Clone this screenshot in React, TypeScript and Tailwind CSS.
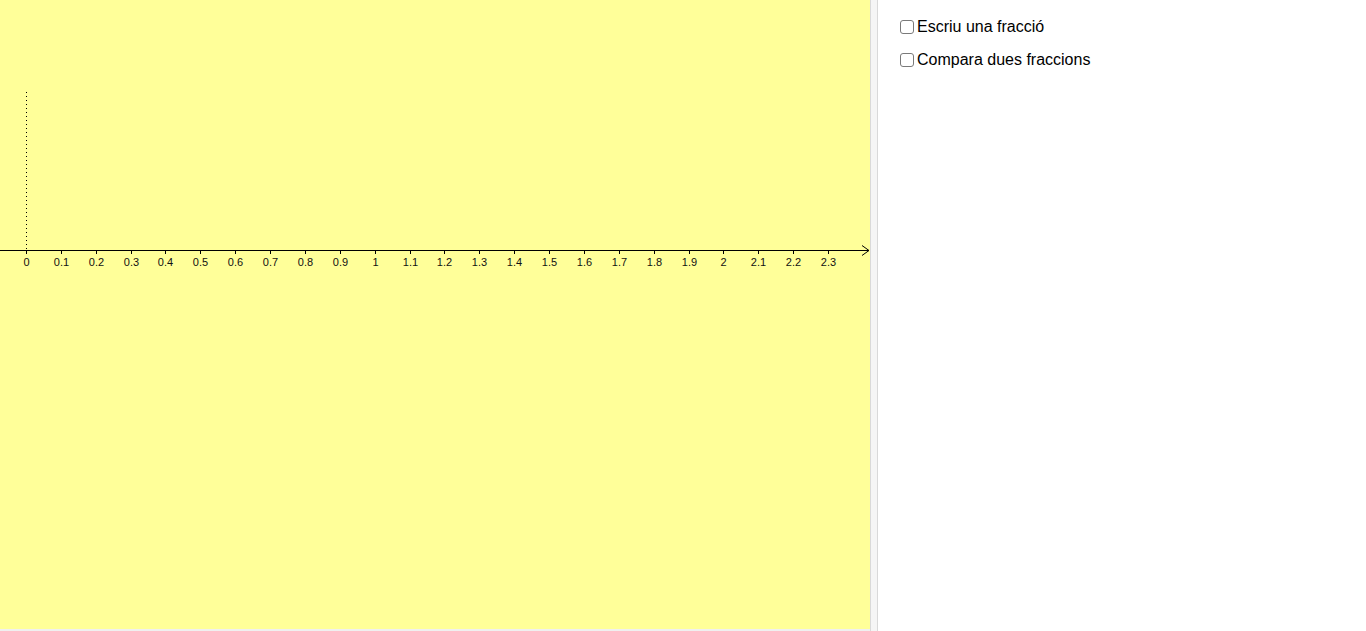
import React from 'react';

const UNIT = 34.87;
const ORIGIN_X = 26;
const AXIS_Y = 250;

const labels = Array.from({ length: 24 }, (_, i) => {
  const v = i / 10;
  return { x: ORIGIN_X + i * UNIT, text: i % 10 === 0 ? String(v) : v.toFixed(1) };
});

function NumberLine() {
  return (
    <svg width="870" height="629" className="block" style={{ fontFamily: '"Liberation Sans", Arial, sans-serif' }}>
      <line x1={ORIGIN_X + 0.5} y1={92} x2={ORIGIN_X + 0.5} y2={AXIS_Y} stroke="#000" strokeWidth="1" strokeDasharray="1 3" />
      <line x1={0} y1={AXIS_Y + 0.5} x2={869} y2={AXIS_Y + 0.5} stroke="#000" strokeWidth="1" />
      <path d={`M862 ${AXIS_Y - 4.5} L869 ${AXIS_Y + 0.5} L862 ${AXIS_Y + 5.5}`} fill="none" stroke="#000" strokeWidth="1" />
      {labels.map((l) => (
        <g key={l.text}>
          <line x1={Math.round(l.x) + 0.5} y1={AXIS_Y} x2={Math.round(l.x) + 0.5} y2={AXIS_Y + 4} stroke="#000" strokeWidth="1" />
          <text x={Math.round(l.x) + 0.5} y={266} fontSize="11" textAnchor="middle" fill="#111">
            {l.text}
          </text>
        </g>
      ))}
    </svg>
  );
}

function Option({ label }: { label: string }) {
  return (
    <label className="flex items-center h-[32px] text-[16px] text-black">
      <span className="w-[14px] h-[14px] rounded-[3px] border border-[#7a7a7a] bg-white mr-[3px]" />
      {label}
    </label>
  );
}

export default function App() {
  return (
    <div className="flex h-[631px] w-[1366px] overflow-hidden bg-white" style={{ fontFamily: '"Liberation Sans", Arial, sans-serif' }}>
      <div className="w-[870px] flex flex-col">
        <div className="h-[629px] bg-[#ffff99]">
          <NumberLine />
        </div>
        <div className="h-[2px] bg-[#f0f0f0]" />
      </div>
      <div className="w-[8px] border-l border-r border-[#d9d9d9] bg-[#f5f5f5]" />
      <div className="flex-1 pl-[22px] pt-[11px]">
        <Option label="Escriu una fracció" />
        <div className="h-px" />
        <Option label="Compara dues fraccions" />
      </div>
    </div>
  );
}
